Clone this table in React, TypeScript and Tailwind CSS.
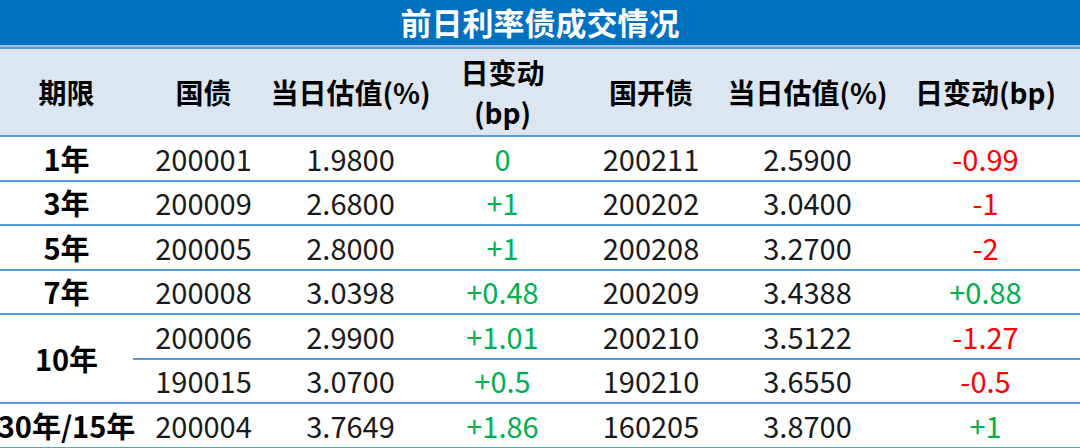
import React from 'react';

type Row = {
  term?: string;
  span?: boolean;
  gz: string;
  gzVal: string;
  gzChg: string;
  gk: string;
  gkVal: string;
  gkChg: string;
};

const rows: Row[] = [
  { term: '1年', gz: '200001', gzVal: '1.9800', gzChg: '0', gk: '200211', gkVal: '2.5900', gkChg: '-0.99' },
  { term: '3年', gz: '200009', gzVal: '2.6800', gzChg: '+1', gk: '200202', gkVal: '3.0400', gkChg: '-1' },
  { term: '5年', gz: '200005', gzVal: '2.8000', gzChg: '+1', gk: '200208', gkVal: '3.2700', gkChg: '-2' },
  { term: '7年', gz: '200008', gzVal: '3.0398', gzChg: '+0.48', gk: '200209', gkVal: '3.4388', gkChg: '+0.88' },
  { term: '10年', span: true, gz: '200006', gzVal: '2.9900', gzChg: '+1.01', gk: '200210', gkVal: '3.5122', gkChg: '-1.27' },
  { gz: '190015', gzVal: '3.0700', gzChg: '+0.5', gk: '190210', gkVal: '3.6550', gkChg: '-0.5' },
  { term: '30年/15年', gz: '200004', gzVal: '3.7649', gzChg: '+1.86', gk: '160205', gkVal: '3.8700', gkChg: '+1' },
];

const font = { fontFamily: '"Noto Sans CJK SC", "Noto Sans", sans-serif' };

const cols = 'grid grid-cols-[133px_141px_153px_151px_146px_167px_189px]';
const cell = 'flex items-center justify-center border-b-2 border-[#5B9BD5] text-[29px] whitespace-nowrap';
const head = 'flex items-center justify-center font-bold text-[28px] text-black whitespace-nowrap';

function chgColor(v: string) {
  if (v.startsWith('-')) return 'text-[#FF0000]';
  return 'text-[#00B050]';
}

export default function App() {
  return (
    <div className="w-[1080px] h-[448px] bg-white overflow-hidden" style={font}>
      {/* title bar */}
      <div className="h-[45px] bg-[#0070C0] flex items-center justify-center text-white text-[31px] font-bold">
        前日利率债成交情况
      </div>
      <div className="h-[2px] bg-[#9DC3E6]" />
      <div className="h-[2px] bg-[#5B9BD5]" />

      {/* header */}
      <div className={`${cols} h-[88px] bg-[#DCE6F1] border-b-2 border-[#5B9BD5]`}>
        <div className={head}>期限</div>
        <div className={head}>国债</div>
        <div className={head}>当日估值(%)</div>
        <div className={`${head} flex-col leading-[40px]`}>
          <span>日变动</span>
          <span>(bp)</span>
        </div>
        <div className={head}>国开债</div>
        <div className={head}>当日估值(%)</div>
        <div className={head}>日变动(bp)</div>
      </div>

      {/* body */}
      <div className={`${cols} auto-rows-[44.5px]`}>
        {rows.map((r, i) => (
          <React.Fragment key={i}>
            {r.term && (
              <div className={`${cell} font-bold text-black text-[28px] ${r.span ? 'row-span-2' : ''}`}>{r.term}</div>
            )}
            <div className={`${cell} text-[#1a1a1a]`}>{r.gz}</div>
            <div className={`${cell} text-[#1a1a1a]`}>{r.gzVal}</div>
            <div className={`${cell} ${chgColor(r.gzChg)}`}>{r.gzChg}</div>
            <div className={`${cell} text-[#1a1a1a]`}>{r.gk}</div>
            <div className={`${cell} text-[#1a1a1a]`}>{r.gkVal}</div>
            <div className={`${cell} ${chgColor(r.gkChg)}`}>{r.gkChg}</div>
          </React.Fragment>
        ))}
      </div>
    </div>
  );
}
